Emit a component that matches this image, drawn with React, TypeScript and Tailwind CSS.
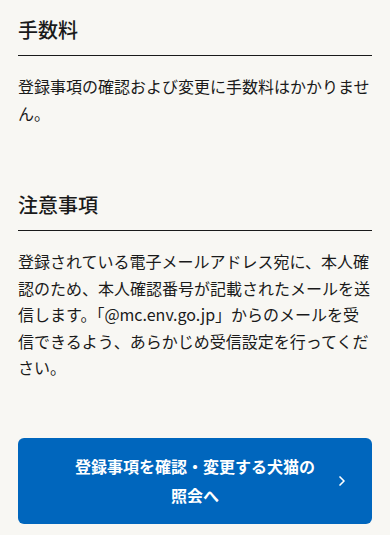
import { ChevronRight } from 'lucide-react';

const font = { fontFamily: '"Noto Sans CJK JP", "Noto Sans", sans-serif' };

function Section({ title, children }: { title: string; children: React.ReactNode }) {
    return (
        <section>
            <h2 className="border-b border-[#1a1a1a] pb-[10px] text-[20px] font-medium leading-[30px] text-[#1a1a1a]">{title}</h2>
            <p className="mt-[17px] text-[16px] leading-[26.5px] text-[#1a1a1a]">{children}</p>
        </section>
    );
}

export default function App() {
    return (
        <div className="min-h-[535px] bg-[#f8f7f3] px-[18px] pt-[15px] pb-[20px]" style={font}>
            <Section title="手数料">登録事項の確認および変更に手数料はかかりません。</Section>

            <div className="mt-[64px]">
                <Section title="注意事項">
                    登録されている電子メールアドレス宛に、本人確認のため、本人確認番号が記載されたメールを送信します。「@mc.env.go.jp」からのメールを受信できるよう、あらかじめ受信設定を行ってください。
                </Section>
            </div>

            {/* Button */}
            <a href="#" className="relative mt-[57px] flex h-[86px] items-center justify-center rounded-[6px] bg-[#0066bd] px-[52px] text-center text-[16px] font-bold leading-[29px] text-white">
                <span>登録事項を確認・変更する犬猫の照会へ</span>
                <ChevronRight className="absolute right-[22px] top-1/2 h-[16px] w-[16px] -translate-y-1/2" strokeWidth={2.5} />
            </a>
        </div>
    );
}
